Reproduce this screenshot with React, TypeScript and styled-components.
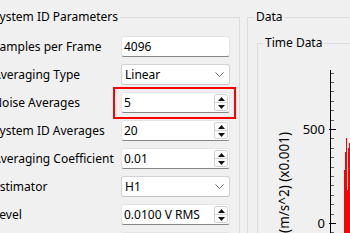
import styled, { createGlobalStyle, css } from "styled-components";

const GlobalStyle = createGlobalStyle`
  html, body {
    margin: 0;
    padding: 0;
    background: #f0f0f0;
  }
  body {
    font-family: "Noto Sans", "Open Sans", sans-serif;
    font-size: 12px;
    color: #000;
  }
`;

const Window = styled.div`
  width: 350px;
  height: 233px;
  overflow: hidden;
  box-sizing: border-box;
  padding-top: 9px;
  display: flex;
  align-items: flex-start;
  gap: 7px;
`;

const GroupBox = styled.fieldset`
  margin: 0;
  min-width: 0;
  border: 1px solid #dcdcdc;
  box-sizing: border-box;
`;

const Legend = styled.legend<{ $shift: number }>`
  padding: 0 2px;
  margin-left: ${(p) => p.$shift}px;
  line-height: 16px;
`;

const ParamsGroup = styled(GroupBox)`
  flex: none;
  width: 264px;
  height: 270px;
  margin-left: -24px;
  padding: 11px 9px 0 16px;
`;

const DataGroup = styled(GroupBox)`
  flex: none;
  width: 240px;
  height: 270px;
  padding: 10px 0 0 9px;
`;

const TimeGroup = styled(GroupBox)`
  height: 240px;
  padding: 0;
`;

const Form = styled.div`
  display: grid;
  grid-template-columns: 128px 109px;
  grid-auto-rows: 21px;
  row-gap: 7px;
  align-items: center;
`;

const Label = styled.div`
  white-space: nowrap;
`;

const fieldBase = css`
  box-sizing: border-box;
  height: 21px;
  background: #fff;
  border: 1px solid #e4e4e4;
  border-radius: 3px;
  display: flex;
  align-items: center;
  padding-left: 2px;
  white-space: nowrap;
`;

const LineEdit = styled.div`
  ${fieldBase};
  border-bottom-color: #868686;
`;

const Combo = styled.div`
  ${fieldBase};
  border-color: #d2d2d2;
  border-bottom-color: #c2c2c2;
  padding-left: 3px;
  padding-right: 5px;
  justify-content: space-between;
`;

const Spin = styled.div<{ $highlight?: boolean }>`
  ${fieldBase};
  position: relative;
  border-bottom-color: #868686;
  justify-content: space-between;
  padding-right: 1px;
  ${(p) =>
    p.$highlight &&
    css`
      &::after {
        content: "";
        position: absolute;
        top: -6px;
        bottom: -7px;
        left: -9px;
        right: -7px;
        border: 2px solid #ff0000;
        pointer-events: none;
      }
    `}
`;

const SpinButtons = styled.div`
  width: 14px;
  height: 17px;
  box-sizing: border-box;
  border: 1px solid #d4d4d4;
  border-radius: 2px;
  display: flex;
  flex-direction: column;
  background: #fbfbfb;
`;

const SpinButton = styled.div`
  flex: 1;
  display: flex;
  align-items: center;
  justify-content: center;
  & + & {
    border-top: 1px solid #d4d4d4;
  }
`;

const Chart = styled.svg`
  display: block;
`;

function Arrows() {
  return (
    <SpinButtons>
      <SpinButton>
        <svg width="7" height="4" viewBox="0 0 7 4">
          <path d="M3.5 0 L7 4 L0 4 Z" fill="#111" />
        </svg>
      </SpinButton>
      <SpinButton>
        <svg width="7" height="4" viewBox="0 0 7 4">
          <path d="M0 0 L7 0 L3.5 4 Z" fill="#111" />
        </svg>
      </SpinButton>
    </SpinButtons>
  );
}

function Chevron() {
  return (
    <svg width="9" height="5" viewBox="0 0 9 5">
      <path d="M0.5 0.5 L4.5 4.5 L8.5 0.5" fill="none" stroke="#666" strokeWidth="1" />
    </svg>
  );
}

// chart coordinates are local to the Time Data box (origin at x=258, y=51 of the page)
const AXIS_X = 72;
const ZERO_Y = 172;
const PX_PER_UNIT = 94 / 500;
const yOf = (v: number) => ZERO_Y - v * PX_PER_UNIT;

const bars = [
  { x: 86, top: 119 },
  { x: 87, top: 101 },
  { x: 88, top: 87 },
  { x: 89, top: 139 },
  { x: 90, top: 97 },
  { x: 91, top: 92 },
];

function TimeChart() {
  const ticks: number[] = [];
  for (let v = -50; v <= 800; v += 50) ticks.push(v);
  return (
    <Chart width="110" height="190">
      <text
        transform="translate(31 81) rotate(-90)"
        textAnchor="end"
        fontSize="13.5"
        fontFamily="Noto Sans, sans-serif"
        fill="#000"
      >
        (m/s^2) (x0.001)
      </text>
      <line x1={AXIS_X + 0.5} y1="19" x2={AXIS_X + 0.5} y2="190" stroke="#000" />
      {ticks.map((v) => {
        const major = v % 500 === 0;
        const y = Math.round(yOf(v)) + 0.5;
        return (
          <line
            key={v}
            x1={major ? AXIS_X - 1 : AXIS_X}
            y1={y}
            x2={major ? AXIS_X + 6 : AXIS_X + 4}
            y2={y}
            stroke="#000"
            strokeOpacity={major ? 1 : 0.6}
          />
        );
      })}
      {[0, 500].map((v) => (
        <text
          key={v}
          x={AXIS_X - 5}
          y={yOf(v) + 4.5}
          textAnchor="end"
          fontSize="13"
          fontFamily="Noto Sans, sans-serif"
          fill="#000"
        >
          {v}
        </text>
      ))}
      {bars.map((b) => (
        <rect key={b.x} x={b.x} y={b.top} width="1" height={190 - b.top} fill="#ff0000" />
      ))}
    </Chart>
  );
}

export default function App() {
  return (
    <>
      <GlobalStyle />
      <Window>
        <ParamsGroup>
          <Legend $shift={-2}>System ID Parameters</Legend>
          <Form>
            <Label>Samples per Frame</Label>
            <LineEdit>4096</LineEdit>

            <Label>Averaging Type</Label>
            <Combo>
              Linear
              <Chevron />
            </Combo>

            <Label>Noise Averages</Label>
            <Spin $highlight>
              5
              <Arrows />
            </Spin>

            <Label>System ID Averages</Label>
            <Spin>
              20
              <Arrows />
            </Spin>

            <Label>Averaging Coefficient</Label>
            <Spin>
              0.01
              <Arrows />
            </Spin>

            <Label>Estimator</Label>
            <Combo>
              H1
              <Chevron />
            </Combo>

            <Label>Level</Label>
            <Spin>
              0.0100 V RMS
              <Arrows />
            </Spin>

            <Label />
            <LineEdit />
          </Form>
        </ParamsGroup>
        <DataGroup>
          <Legend $shift={-3}>Data</Legend>
          <TimeGroup>
            <Legend $shift={5}>Time Data</Legend>
            <TimeChart />
          </TimeGroup>
        </DataGroup>
      </Window>
    </>
  );
}
